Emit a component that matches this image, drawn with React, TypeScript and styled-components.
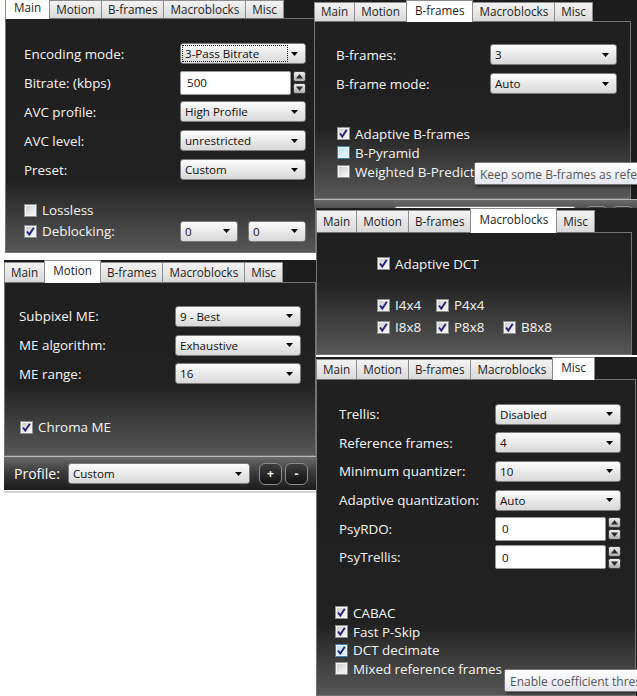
import React from 'react';
import styled, { createGlobalStyle, css } from 'styled-components';

const GlobalStyle = createGlobalStyle`
  html, body {
    margin: 0;
    padding: 0;
    background: #ffffff;
  }
  body {
    font-family: 'Open Sans', 'Noto Sans', sans-serif;
  }
`;

const TAB_NAMES = ['Main', 'Motion', 'B-frames', 'Macroblocks', 'Misc'];

const Canvas = styled.div`
  position: relative;
  width: 637px;
  height: 696px;
  overflow: hidden;
  background: #ffffff;
`;

// each settings window is a separate screenshot placed on the canvas
const Window = styled.div<{ $x: number; $y: number; $w: number; $h: number }>`
  position: absolute;
  left: ${(p) => p.$x}px;
  top: ${(p) => p.$y}px;
  width: ${(p) => p.$w}px;
  height: ${(p) => p.$h}px;
  display: flex;
  flex-direction: column;
  overflow: hidden;
  background: #1d1d1d;
`;

const TabBar = styled.div<{ $h: number }>`
  display: flex;
  align-items: flex-end;
  height: ${(p) => p.$h}px;
  flex-shrink: 0;
  background: #1d1d1d;
  position: relative;
  z-index: 2;
`;

const Tab = styled.div<{ $active?: boolean }>`
  display: flex;
  align-items: center;
  box-sizing: border-box;
  height: calc(100% - 2px);
  padding: 0 6px;
  margin-right: -1px;
  border: 1px solid #8c8c8c;
  border-bottom: none;
  background: linear-gradient(#f3f3f3, #d9d9d9);
  color: #1e1e1e;
  font-size: 11.7px;
  line-height: 1;
  ${(p) =>
    p.$active &&
    css`
      height: calc(100% + 1px);
      margin-bottom: -1px;
      padding: 0 8px 2px;
      background: #ffffff;
      position: relative;
      z-index: 1;
    `}
`;

const Body = styled.div<{ $pt: number; $pl: number; $mr?: number; $h?: number }>`
  flex: ${(p) => (p.$h ? 'none' : '1')};
  height: ${(p) => (p.$h ? `${p.$h}px` : 'auto')};
  position: relative;
  box-sizing: border-box;
  min-height: 0;
  margin-right: ${(p) => p.$mr ?? 0}px;
  padding: ${(p) => p.$pt}px 0 0 ${(p) => p.$pl}px;
  border: 1px solid #747474;
  background: linear-gradient(#202020 0, #212121 calc(100% - 72px), #575757 100%);
`;

const FormGrid = styled.div<{ $label: number; $ctrl: number; $row: number }>`
  display: grid;
  grid-template-columns: ${(p) => p.$label}px ${(p) => p.$ctrl}px;
  grid-auto-rows: ${(p) => p.$row}px;
  align-items: center;
`;

const Label = styled.div`
  color: #f5f5f5;
  font-size: 13.4px;
  white-space: nowrap;
`;

const ComboBox = styled.div<{ $w?: number }>`
  display: flex;
  align-items: center;
  justify-content: space-between;
  box-sizing: border-box;
  width: ${(p) => (p.$w ? `${p.$w}px` : '100%')};
  height: 21px;
  padding: 0 7px 0 4px;
  border: 1px solid #7b7b7b;
  border-radius: 3px;
  background: linear-gradient(#fdfdfd, #e9e9e9 50%, #d8d8d8);
  color: #111;
  font-size: 11.6px;
`;

const FocusText = styled.span`
  flex: 1;
  margin: 0 4px 0 -2px;
  padding: 0 2px;
  outline: 1px dotted #222;
  line-height: 15px;
`;

const SpinWrap = styled.div`
  display: flex;
  align-items: center;
  gap: 2px;
`;

const SpinInput = styled.div`
  display: flex;
  align-items: center;
  box-sizing: border-box;
  flex: 1;
  height: 24px;
  padding-left: 6px;
  border: 1px solid #9a9a9a;
  border-radius: 2px;
  background: #ffffff;
  color: #111;
  font-size: 11.6px;
`;

const SpinButtons = styled.div`
  display: flex;
  flex-direction: column;
  gap: 1px;
`;

const CheckList = styled.div<{ $mt: number; $row: number; $ml?: number }>`
  display: grid;
  grid-auto-rows: ${(p) => p.$row}px;
  align-items: center;
  margin-top: ${(p) => p.$mt}px;
  margin-left: ${(p) => p.$ml ?? 0}px;
`;

const CheckRow = styled.div`
  display: flex;
  align-items: center;
  gap: 5px;
  color: #f5f5f5;
  font-size: 13.4px;
  white-space: nowrap;
`;

const PairRow = styled.div`
  display: flex;
  gap: 10px;
`;

const BlockGrid = styled.div<{ $mt: number }>`
  display: grid;
  grid-template-columns: 59px 67px 60px;
  grid-auto-rows: 22px;
  align-items: center;
  margin-top: ${(p) => p.$mt}px;
`;

const ProfileBar = styled.div<{ $pl: number }>`
  display: flex;
  align-items: center;
  flex-shrink: 0;
  box-sizing: border-box;
  height: 34px;
  padding-left: ${(p) => p.$pl}px;
  gap: 8px;
  border-top: 1px solid #b9b9b9;
  background: linear-gradient(#6a6a6a, #3c3c3c 45%, #1c1c1c);
`;

const ProfileLabel = styled.span`
  color: #ffffff;
  font-size: 14px;
`;

const LabelSpace = styled.span`
  width: 55px;
`;

const RoundButtons = styled.div`
  display: flex;
  gap: 3px;
  margin-left: 1px;
`;

const RoundButton = styled.div`
  display: flex;
  align-items: center;
  justify-content: center;
  box-sizing: border-box;
  width: 23px;
  height: 22px;
  border: 1px solid #8e8e8e;
  border-radius: 6px;
  background: linear-gradient(#3e3e3e, #121212);
  color: #ffffff;
  font-size: 12px;
  font-weight: 700;
`;

const BottomEdge = styled.div`
  height: 3px;
  flex-shrink: 0;
  background: linear-gradient(#ffffff 0 1px, #d4d4d4 1px);
`;

const Tooltip = styled.div<{ $x: number; $y: number }>`
  position: absolute;
  left: ${(p) => p.$x}px;
  top: ${(p) => p.$y}px;
  z-index: 5;
  box-sizing: border-box;
  height: 23px;
  padding: 3px 6px 0 5px;
  border: 1px solid #767676;
  border-radius: 2px;
  background: linear-gradient(#ffffff, #e5e6ef);
  box-shadow: 2px 2px 3px rgba(0, 0, 0, 0.45);
  color: #575757;
  font-size: 12px;
  white-space: nowrap;
`;

function Arrow() {
  return (
    <svg width="7" height="4" viewBox="0 0 7 4">
      <path d="M0 0 H7 L3.5 4 Z" fill="#000" />
    </svg>
  );
}

function Combo({ value, w, focused }: { value: string; w?: number; focused?: boolean }) {
  return (
    <ComboBox $w={w}>
      {focused ? <FocusText>{value}</FocusText> : <span>{value}</span>}
      <Arrow />
    </ComboBox>
  );
}

function SpinArrow({ up }: { up?: boolean }) {
  return (
    <svg width="13" height="11" viewBox="0 0 13 11">
      <defs>
        <linearGradient id={up ? 'spu' : 'spd'} x1="0" y1="0" x2="0" y2="1">
          <stop offset="0" stopColor="#f2f2f2" />
          <stop offset="1" stopColor="#a9a9a9" />
        </linearGradient>
      </defs>
      <rect x="0.5" y="0.5" width="12" height="10" rx="2" fill={`url(#${up ? 'spu' : 'spd'})`} stroke="#3a3a3a" />
      {up ? <path d="M3 7.5 H10 L6.5 3 Z" fill="#2a2a2a" /> : <path d="M3 3.5 H10 L6.5 8 Z" fill="#2a2a2a" />}
    </svg>
  );
}

function Spin({ value }: { value: string }) {
  return (
    <SpinWrap>
      <SpinInput>{value}</SpinInput>
      <SpinButtons>
        <SpinArrow up />
        <SpinArrow />
      </SpinButtons>
    </SpinWrap>
  );
}

// hover = pointer over the box (light blue), checked or not
interface ICheckProps {
  checked?: boolean;
  hover?: boolean;
}

function CheckBox({ checked, hover }: ICheckProps) {
  const gid = hover ? 'cb-hover' : 'cb-plain';
  return (
    <svg width="13" height="13" viewBox="0 0 13 13" style={{ flexShrink: 0 }}>
      <defs>
        <linearGradient id={gid} x1="0" y1="0" x2="1" y2="1">
          <stop offset="0" stopColor={hover ? '#bfe3f8' : '#cfcfcf'} />
          <stop offset="1" stopColor={hover ? '#e9f6fd' : '#f7f7f7'} />
        </linearGradient>
      </defs>
      <rect x="0.5" y="0.5" width="12" height="12" fill={hover ? '#e8f5fd' : '#f4f4f4'} stroke={hover ? '#3c7fb1' : '#8e8f8f'} />
      <rect x="2" y="2" width="9" height="9" fill={`url(#${gid})`} />
      {checked && <path d="M3 6.5 L5.3 9.5 L9.8 2.8" fill="none" stroke="#22227a" strokeWidth="1.9" />}
    </svg>
  );
}

function Check({ label, checked, hover }: ICheckProps & { label: string }) {
  return (
    <CheckRow>
      <CheckBox checked={checked} hover={hover} />
      <span>{label}</span>
    </CheckRow>
  );
}

function Tabs({ active, h }: { active: string; h: number }) {
  return (
    <TabBar $h={h}>
      {TAB_NAMES.map((t) => (
        <Tab key={t} $active={t === active}>
          {t}
        </Tab>
      ))}
    </TabBar>
  );
}

// peek: only the top edge of the bar shows, so its texts are left out
function Profile({ pl, peek }: { pl: number; peek?: boolean }) {
  return (
    <ProfileBar $pl={pl}>
      {peek ? <LabelSpace /> : <ProfileLabel>Profile:</ProfileLabel>}
      <Combo value={peek ? '' : 'Custom'} w={182} />
      <RoundButtons>
        <RoundButton>{peek ? '' : '+'}</RoundButton>
        <RoundButton>{peek ? '' : '-'}</RoundButton>
      </RoundButtons>
    </ProfileBar>
  );
}

function MainWindow() {
  return (
    <Window $x={5} $y={-2} $w={311} $h={255}>
      <Tabs active="Main" h={20} />
      <Body $pt={20} $pl={18}>
        <FormGrid $label={156} $ctrl={126} $row={29}>
          <Label>Encoding mode:</Label>
          <Combo value="3-Pass Bitrate" focused />
          <Label>Bitrate: (kbps)</Label>
          <Spin value="500" />
          <Label>AVC profile:</Label>
          <Combo value="High Profile" />
          <Label>AVC level:</Label>
          <Combo value="unrestricted" />
          <Label>Preset:</Label>
          <Combo value="Custom" />
        </FormGrid>
        <CheckList $mt={16} $row={20}>
          <Check label="Lossless" />
        </CheckList>
        <FormGrid $label={156} $ctrl={126} $row={22}>
          <Check label="Deblocking:" checked />
          <PairRow>
            <Combo value="0" w={58} />
            <Combo value="0" w={58} />
          </PairRow>
        </FormGrid>
      </Body>
    </Window>
  );
}

function MotionWindow() {
  return (
    <Window $x={4} $y={260} $w={312} $h={233}>
      <Tabs active="Motion" h={22} />
      <Body $pt={19} $pl={14}>
        <FormGrid $label={156} $ctrl={126} $row={28.7}>
          <Label>Subpixel ME:</Label>
          <Combo value="9 - Best" />
          <Label>ME algorithm:</Label>
          <Combo value="Exhaustive" />
          <Label>ME range:</Label>
          <Combo value="16" />
        </FormGrid>
        <CheckList $mt={29} $row={20} $ml={1}>
          <Check label="Chroma ME" checked />
        </CheckList>
      </Body>
      <Profile pl={10} />
      <BottomEdge />
    </Window>
  );
}

function BFramesWindow() {
  return (
    <Window $x={314} $y={0} $w={323} $h={208}>
      <Tabs active="B-frames" h={21} />
      <Body $pt={18} $pl={21} $mr={6} $h={178}>
        <FormGrid $label={154} $ctrl={127} $row={29}>
          <Label>B-frames:</Label>
          <Combo value="3" />
          <Label>B-frame mode:</Label>
          <Combo value="Auto" />
        </FormGrid>
        <CheckList $mt={26} $row={19} $ml={1}>
          <Check label="Adaptive B-frames" checked />
          <Check label="B-Pyramid" hover />
          <Check label="Weighted B-Prediction" />
        </CheckList>
        <Tooltip $x={159} $y={140}>Keep some B-frames as references</Tooltip>
      </Body>
      <Profile pl={17} peek />
    </Window>
  );
}

function MacroblocksWindow() {
  return (
    <Window $x={316} $y={208} $w={321} $h={147}>
      <Tabs active="Macroblocks" h={24} />
      <Body $pt={21} $pl={60} $mr={5}>
        <CheckList $mt={0} $row={19}>
          <Check label="Adaptive DCT" checked />
        </CheckList>
        <BlockGrid $mt={21}>
          <Check label="I4x4" checked />
          <Check label="P4x4" checked />
          <span />
          <Check label="I8x8" checked />
          <Check label="P8x8" checked />
          <Check label="B8x8" checked />
        </BlockGrid>
      </Body>
    </Window>
  );
}

function MiscWindow() {
  return (
    <Window $x={316} $y={357} $w={321} $h={339}>
      <Tabs active="Misc" h={22} />
      <Body $pt={20} $pl={22} $mr={1}>
        <FormGrid $label={156} $ctrl={126} $row={28.6}>
          <Label>Trellis:</Label>
          <Combo value="Disabled" />
          <Label>Reference frames:</Label>
          <Combo value="4" />
          <Label>Minimum quantizer:</Label>
          <Combo value="10" />
          <Label>Adaptive quantization:</Label>
          <Combo value="Auto" />
          <Label>PsyRDO:</Label>
          <Spin value="0" />
          <Label>PsyTrellis:</Label>
          <Spin value="0" />
        </FormGrid>
        <CheckList $mt={32} $row={18.7} $ml={-4}>
          <Check label="CABAC" checked />
          <Check label="Fast P-Skip" checked />
          <Check label="DCT decimate" checked hover />
          <Check label="Mixed reference frames" />
        </CheckList>
        <Tooltip $x={187} $y={289}>Enable coefficient thresholding on P-frames</Tooltip>
      </Body>
    </Window>
  );
}

export default function App() {
  return (
    <>
      <GlobalStyle />
      <Canvas>
        <MainWindow />
        <BFramesWindow />
        <MacroblocksWindow />
        <MotionWindow />
        <MiscWindow />
      </Canvas>
    </>
  );
}
